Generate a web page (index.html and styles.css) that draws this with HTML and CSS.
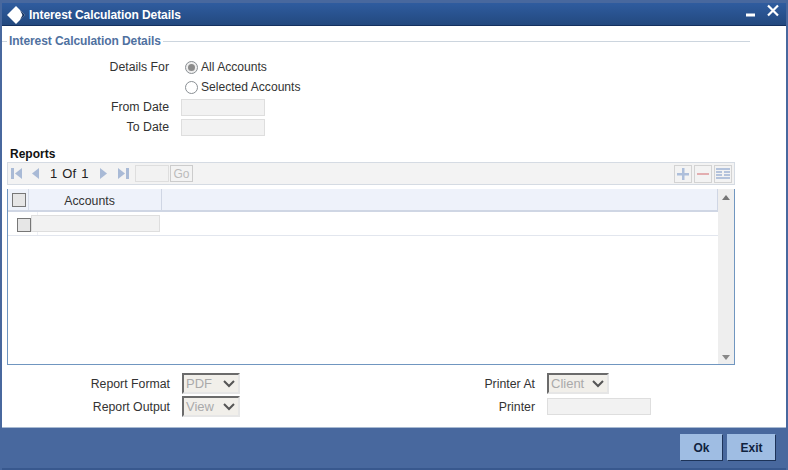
FILE: index.html
```html
<!DOCTYPE html>
<html lang="en">
<head>
<meta charset="utf-8">
<title>Interest Calculation Details</title>
<link rel="stylesheet" href="styles.css">
</head>
<body>
<div class="window">
  <header class="titlebar">
    <svg class="logo" width="18" height="18" viewBox="0 0 18 18"><path d="M0 9 9 0 18 9 9 18Z" fill="#fff"/><path d="M18 9 13 4 15.500 9 13 14Z" fill="#12315f"/></svg>
    <span class="title">Interest Calculation Details</span>
    <svg class="winctl" width="34" height="14" viewBox="0 0 34 14"><path d="M0 9.500h9v3H0Z" fill="#fff"/><path d="M22 1.500 32 11.500M32 1.500 22 11.500" stroke="#fff" stroke-width="2.200" fill="none"/></svg>
  </header>
  <main class="content">
    <div class="legend"><span class="dash"></span><span class="legend-text">Interest Calculation Details</span><span class="legend-line"></span></div>
    <div class="details">
      <div class="row radio-row"><label class="lbl">Details For</label><span class="radio checked"></span><span class="val">All Accounts</span></div>
      <div class="row radio-row"><span class="lbl"></span><span class="radio"></span><span class="val">Selected Accounts</span></div>
      <div class="row date-row"><label class="lbl">From Date</label><input class="field date" disabled></div>
      <div class="row date-row"><label class="lbl">To Date</label><input class="field date" disabled></div>
    </div>
    <h2 class="reports">Reports</h2>
    <div class="toolbar">
      <svg class="pager" width="122" height="14" viewBox="0 0 122 14">
        <g fill="#a9bad6"><rect x="3" y="1" width="3" height="11"/><path d="M14 1v11L7 6.500Z"/><path d="M31 1v11l-7-5.500Z"/><path d="M92 1v11l7-5.500Z"/><path d="M110 1v11l7-5.500Z"/><rect x="118" y="1" width="3" height="11"/></g>
      </svg>
      <span class="pageinfo">1 Of 1</span>
      <input class="field pageno" disabled>
      <button class="go" disabled>Go</button>
      <span class="spacer"></span>
      <span class="tool"><svg width="16" height="16" viewBox="0 0 16 16"><path d="M7 2h2.500v5H14v2.500H9.500V14H7V9.500H2V7h5Z" fill="#aebfdb"/></svg></span>
      <span class="tool"><svg width="16" height="16" viewBox="0 0 16 16"><rect x="2" y="7" width="12" height="2" fill="#e3aeb0"/></svg></span>
      <span class="tool"><svg width="16" height="16" viewBox="0 0 16 16"><path d="M1 2h14v2H1ZM1 5h6v2H1ZM9 5h6v2H9ZM1 8h6v2H1ZM9 8h6v2H9ZM1 11h14v2H1Z" fill="#b4c3dc"/></svg></span>
    </div>
    <div class="grid">
      <div class="grid-body">
        <div class="grid-head">
          <span class="check-cell"><span class="check"></span></span>
          <span class="col-accounts">Accounts</span>
        </div>
        <div class="grid-row">
          <span class="check-cell row-check"><span class="check"></span></span>
          <input class="field acct" disabled>
        </div>
      </div>
      <div class="scrollbar">
        <svg width="8" height="5" viewBox="0 0 8 5"><path d="M4 0 8 5H0Z" fill="#777"/></svg>
        <svg width="8" height="5" viewBox="0 0 8 5"><path d="M0 0H8L4 5Z" fill="#888"/></svg>
      </div>
    </div>
    <div class="options">
      <div class="opt-col">
        <div class="opt-row"><label class="opt-lbl">Report Format</label><div class="sel sel-s"><span>PDF</span><svg width="12" height="8" viewBox="0 0 12 8"><path d="M1 1 6 6l5-5" stroke="#555" stroke-width="2" fill="none"/></svg></div></div>
        <div class="opt-row"><label class="opt-lbl">Report Output</label><div class="sel sel-s"><span>View</span><svg width="12" height="8" viewBox="0 0 12 8"><path d="M1 1 6 6l5-5" stroke="#555" stroke-width="2" fill="none"/></svg></div></div>
      </div>
      <div class="opt-col opt-right">
        <div class="opt-row"><label class="opt-lbl">Printer At</label><div class="sel sel-c"><span>Client</span><svg width="12" height="8" viewBox="0 0 12 8"><path d="M1 1 6 6l5-5" stroke="#555" stroke-width="2" fill="none"/></svg></div></div>
        <div class="opt-row"><label class="opt-lbl">Printer</label><input class="field printer" disabled></div>
      </div>
    </div>
  </main>
  <footer class="footer">
    <button class="btn ok">Ok</button>
    <button class="btn exit">Exit</button>
  </footer>
</div>
</body>
</html>
```
FILE: styles.css
```css
* { box-sizing: border-box; }
html, body { margin: 0; padding: 0; }
body { font-family: "Liberation Sans", Arial, sans-serif; font-size: 12.300px; color: #333; background: #fff; }
.window { width: 788px; height: 470px; display: flex; flex-direction: column; background: #fff; border-left: 2px solid #48689e; border-right: 2px solid #48689e; overflow: hidden; }
.titlebar { height: 26px; flex: none; display: flex; align-items: center; padding: 1px 6px 0 7px; background: linear-gradient(#2f5c9f, #23497f); border-top: 3px solid #48689e; border-bottom: 1px solid #14305f; margin: 0 -2px; }
.logo { flex: none; }
.title { margin-left: 4px; color: #fff; font-weight: bold; font-size: 12px; letter-spacing: -0.08px; flex: 1; }
.winctl { flex: none; margin: -8px 2px 0 0; }
.content { flex: 1; min-height: 0; display: flex; flex-direction: column; }
.legend { display: flex; align-items: center; height: 16px; margin-top: 7px; }
.dash { width: 5px; height: 1px; background: #ccd5de; flex: none; }
.legend-text { color: #50719f; font-weight: bold; font-size: 12px; letter-spacing: -0.08px; padding: 0 2px; }
.legend-line { width: 587px; height: 1px; background: #ccd5de; flex: none; }
.details { margin-top: 8px; display: flex; flex-direction: column; }
.row { display: flex; align-items: center; height: 20px; }
.lbl { width: 167px; text-align: right; flex: none; }
.radio { width: 13px; height: 13px; margin-left: 16px; border: 1px solid #8a8f94; border-radius: 50%; background: #fff; flex: none; display: flex; align-items: center; justify-content: center; }
.radio.checked { background: #eee; }
.radio.checked::after { content: ""; width: 7px; height: 7px; border-radius: 50%; background: #8b8b8b; }
.val { margin-left: 3px; font-size: 12.100px; }
.field { display: block; padding: 0; margin: 0; background: #f2f2f2; border: 1px solid #dedede; }
.date { width: 84px; height: 17px; margin-left: 12px; }
.reports { margin: 9px 0 0 8px; font-size: 12px; font-weight: bold; color: #111; line-height: 16px; height: 16px; }
.toolbar { margin: 0 0 0 5px; width: 728px; height: 23px; background: #f3f3f3; border: 1px solid #d5dbe3; display: flex; align-items: center; }
.pager { flex: none; margin-right: -122px; }
.pageinfo { margin-left: 42px; width: 85px; font-size: 13px; color: #222; word-spacing: 1.500px; flex: none; }
.pageno { width: 34px; height: 17px; }
.go { width: 23px; height: 17px; margin: 0 0 0 1px; padding: 0; font: 12px "Liberation Sans", Arial, sans-serif; color: #bbb; background: #f3f3f3; border: 1px solid #ccc; }
.spacer { flex: 1; }
.tool { width: 18px; height: 18px; margin-right: 2px; border: 1px solid #d3d3d3; display: flex; align-items: center; justify-content: center; background: #f3f3f3; }
.grid { margin: 4px 0 0 5px; width: 728px; height: 176px; display: flex; border-left: 1px solid #7096c0; border-right: 1px solid #7096c0; border-bottom: 1px solid #7096c0; }
.grid-body { flex: none; width: 710px; }
.grid-head { height: 23px; background: #eef2fa; border-bottom: 2px solid #cfd6e4; border-right: 1px solid #cfd6e4; display: flex; }
.check-cell { width: 21px; flex: none; display: flex; align-items: center; justify-content: center; padding-left: 1px; border-right: 1px solid #d5dbe8; }
.check { width: 14px; height: 14px; background: #e6e6e6; border: 1px solid #777; display: block; }
.col-accounts { width: 133px; flex: none; text-align: center; padding: 1px 11px 0 0; border-right: 1px solid #cfd6e4; line-height: 22px; color: #333; }
.grid-row { height: 24px; border-bottom: 1px solid #e2e6ee; display: flex; align-items: center; }
.row-check { width: 30px; height: 23px; padding: 2px 0 0 3px; border-right: 1px solid #eef0f5; }
.acct { width: 129px; height: 17px; margin-left: -7px; }
.scrollbar { flex: 1; background: #eeeeee; display: flex; flex-direction: column; justify-content: space-between; align-items: center; padding: 6px 0 4px; }
.options { display: flex; margin-top: 8px; }
.opt-col { display: flex; flex-direction: column; gap: 2px; }
.opt-right { margin-left: 226px; }
.opt-row { display: flex; align-items: center; height: 21px; }
.opt-lbl { width: 168px; text-align: right; margin-right: 12px; flex: none; }
.opt-right .opt-lbl { width: 69px; }
.sel { height: 21px; display: flex; align-items: center; justify-content: space-between; padding: 0 3px 0 2px; background: #f1efea; color: #aaa; border: 2px solid #e6e6e6; border-top-color: #6b6b6b; border-left-color: #6b6b6b; font-size: 13px; }
.sel-s { width: 58px; }
.sel-c { width: 62px; }
.printer { width: 104px; height: 17px; }
.footer { height: 43px; flex: none; background: #48689e; border-top: 1px solid #a8bad2; border-bottom: 2px solid #38588e; margin: 0 -2px; display: flex; justify-content: flex-end; align-items: flex-start; gap: 4px; padding: 6px 12px 0 0; }
.btn { height: 27px; padding: 0; margin: 0; font: bold 12px "Liberation Sans", Arial, sans-serif; color: #10233f; background: #9fbde3; border: 1px solid #9fbde3; border-right-color: #1d3358; border-bottom-color: #1d3358; }
.ok { width: 43px; }
.exit { width: 49px; }
```
